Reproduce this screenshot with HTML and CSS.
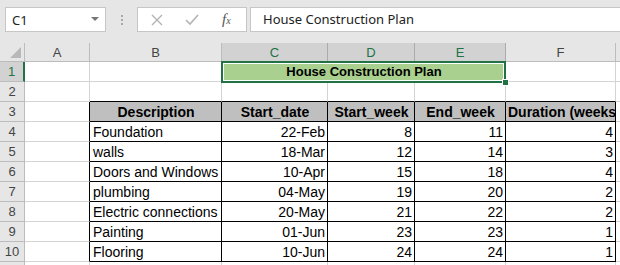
FILE: index.html
```html
<!DOCTYPE html>
<html lang="en">
<head>
    <meta charset="UTF-8">
    <title>House Construction Plan</title>
    <link rel="stylesheet" href="styles.css">
</head>
<body>
    <div class="toolbar">
        <div class="name-box">
            <span>C1</span>
            <span class="drop"></span>
        </div>
        <div class="dots"><i></i><i></i><i></i></div>
        <div class="fx-buttons">
            <svg width="14" height="14" viewBox="0 0 14 14"><path d="M2 2 L12 12 M12 2 L2 12" stroke="#b3b3b3" stroke-width="1.4" fill="none"/></svg>
            <svg width="16" height="14" viewBox="0 0 16 14"><path d="M2 7 L6 11 L14 2" stroke="#b3b3b3" stroke-width="1.6" fill="none"/></svg>
            <span class="fx">f<sub>x</sub></span>
        </div>
        <div class="formula">House Construction Plan</div>
    </div>

    <div class="sheet" id="sheet"></div>

    <script>
        const sheet = document.getElementById('sheet');
        const letters = ['A', 'B', 'C', 'D', 'E', 'F', ''];
        const rows = [
            ['Foundation', '22-Feb', 8, 11, 4],
            ['walls', '18-Mar', 12, 14, 3],
            ['Doors and Windows', '10-Apr', 15, 18, 4],
            ['plumbing', '04-May', 19, 20, 2],
            ['Electric connections', '20-May', 21, 22, 2],
            ['Painting', '01-Jun', 23, 23, 1],
            ['Flooring', '10-Jun', 24, 24, 1]
        ];

        function cell(cls, text) {
            const div = document.createElement('div');
            div.className = 'cell ' + cls;
            if (text !== undefined) div.textContent = text;
            sheet.appendChild(div);
            return div;
        }

        // column headers
        cell('corner');
        letters.forEach((l, i) => {
            cell('col-head' + (i >= 2 && i <= 4 ? ' sel' : ''), l);
        });

        // row 1: merged title, selected
        cell('row-head sel', 1);
        cell('');
        cell('');
        const title = cell('title', 'House Construction Plan');
        title.insertAdjacentHTML('beforeend', '<span class="outline"></span><span class="handle"></span>');
        cell('');
        cell('');

        // row 2
        cell('row-head', 2);
        cell('');
        for (let i = 0; i < 5; i++) cell('tb');
        cell('');

        // row 3: table header
        cell('row-head', 3);
        cell('tr');
        cell('t th', 'Description');
        cell('t th', 'Start_date');
        cell('t th', 'Start_week');
        cell('t th', 'End_week');
        cell('t th left', 'Duration (weeks)');
        cell('');

        rows.forEach((r, i) => {
            cell('row-head', i + 4);
            cell('tr');
            cell('t', r[0]);
            cell('t num', r[1]);
            cell('t num', r[2]);
            cell('t num', r[3]);
            cell('t num', r[4]);
            cell('');
        });

        // partly visible row 11
        cell('row-head');
        for (let i = 0; i < 7; i++) cell('');
    </script>
</body>
</html>
```

FILE: styles.css
```css
body {
    margin: 0;
    background: #fff;
    font-family: "Liberation Sans", Arial, sans-serif;
    overflow: hidden;
}
.toolbar {
    height: 43px;
    box-sizing: border-box;
    background: #e6e6e6;
    display: flex;
    align-items: flex-start;
    padding-top: 7px;
    padding-left: 5px;
}
.name-box {
    width: 101px;
    height: 25px;
    box-sizing: border-box;
    background: #fff;
    border: 1px solid #c6c6c6;
    display: flex;
    align-items: center;
    justify-content: space-between;
    padding: 0 6px;
    font-family: "Noto Sans", sans-serif;
    font-size: 13px;
    color: #222;
}
.drop {
    width: 0;
    height: 0;
    border-left: 4px solid transparent;
    border-right: 4px solid transparent;
    border-top: 4px solid #777;
    margin-top: -2px;
}
.dots {
    width: 31px;
    height: 25px;
    display: flex;
    flex-direction: column;
    align-items: center;
    justify-content: center;
    gap: 2px;
}
.dots i {
    width: 2px;
    height: 2px;
    background: #a8a8a8;
}
.fx-buttons {
    width: 110px;
    height: 25px;
    box-sizing: border-box;
    background: #fff;
    border: 1px solid #c6c6c6;
    display: flex;
    align-items: center;
    padding-left: 12px;
    gap: 20px;
}
.fx {
    font-family: "Liberation Serif", serif;
    font-style: italic;
    font-size: 15px;
    color: #555;
    margin-left: 2px;
}
.fx sub {
    font-size: 10px;
    vertical-align: 0;
}
.formula {
    margin-left: 3px;
    flex: 1;
    height: 25px;
    box-sizing: border-box;
    background: #fff;
    border: 1px solid #c6c6c6;
    border-right: none;
    padding-left: 12px;
    font-family: "Noto Sans", sans-serif;
    font-size: 13px;
    line-height: 23px;
    color: #222;
}
.sheet {
    display: grid;
    grid-template-columns: 25px 65px 132px 106px 87px 91px 110px 1fr;
    grid-template-rows: 19px;
    grid-auto-rows: 20px;
}
.cell {
    box-sizing: border-box;
    border-right: 1px solid #d4d4d4;
    border-bottom: 1px solid #d4d4d4;
    font-size: 14px;
    color: #000;
    padding: 0 2px 1px 3px;
    display: flex;
    align-items: flex-end;
    white-space: nowrap;
    overflow: hidden;
}
.corner {
    background: #e6e6e6;
    border-right-color: #bcbcbc;
    border-bottom-color: #bcbcbc;
    position: relative;
}
.corner::after {
    content: "";
    position: absolute;
    right: 3px;
    bottom: 3px;
    border-left: 11px solid transparent;
    border-bottom: 11px solid #b8b8b8;
}
.col-head,
.row-head {
    background: #e6e6e6;
    border-right-color: #bcbcbc;
    border-bottom-color: #bcbcbc;
    justify-content: center;
    align-items: center;
    color: #444;
    font-size: 13px;
    padding: 0;
}
.col-head.sel {
    background: #d2d2d2;
    color: #217346;
    border-right-color: #ababab;
}
.row-head.sel {
    background: #d2d2d2;
    color: #217346;
    border-right: 2px solid #217346;
}
.title {
    grid-column: span 3;
    background: #a9d08e;
    justify-content: center;
    font-weight: bold;
    font-size: 13px;
    position: relative;
    overflow: visible;
    padding-bottom: 2px;
}
.outline {
    position: absolute;
    left: -1px;
    top: -1px;
    right: -1px;
    bottom: -2px;
    border: 2px solid #217346;
    box-shadow: inset 0 0 0 1px #fff;
}
.handle {
    position: absolute;
    right: -4px;
    bottom: -5px;
    width: 5px;
    height: 5px;
    background: #217346;
    border: 1px solid #fff;
}
.t {
    border-right-color: #000;
    border-bottom-color: #000;
}
.tr {
    border-right-color: #000;
}
.tb {
    border-bottom-color: #000;
}
.th {
    background: #bfbfbf;
    font-weight: bold;
    justify-content: center;
}
.th.left {
    justify-content: flex-start;
    padding-left: 2px;
}
.num {
    justify-content: flex-end;
}
```
